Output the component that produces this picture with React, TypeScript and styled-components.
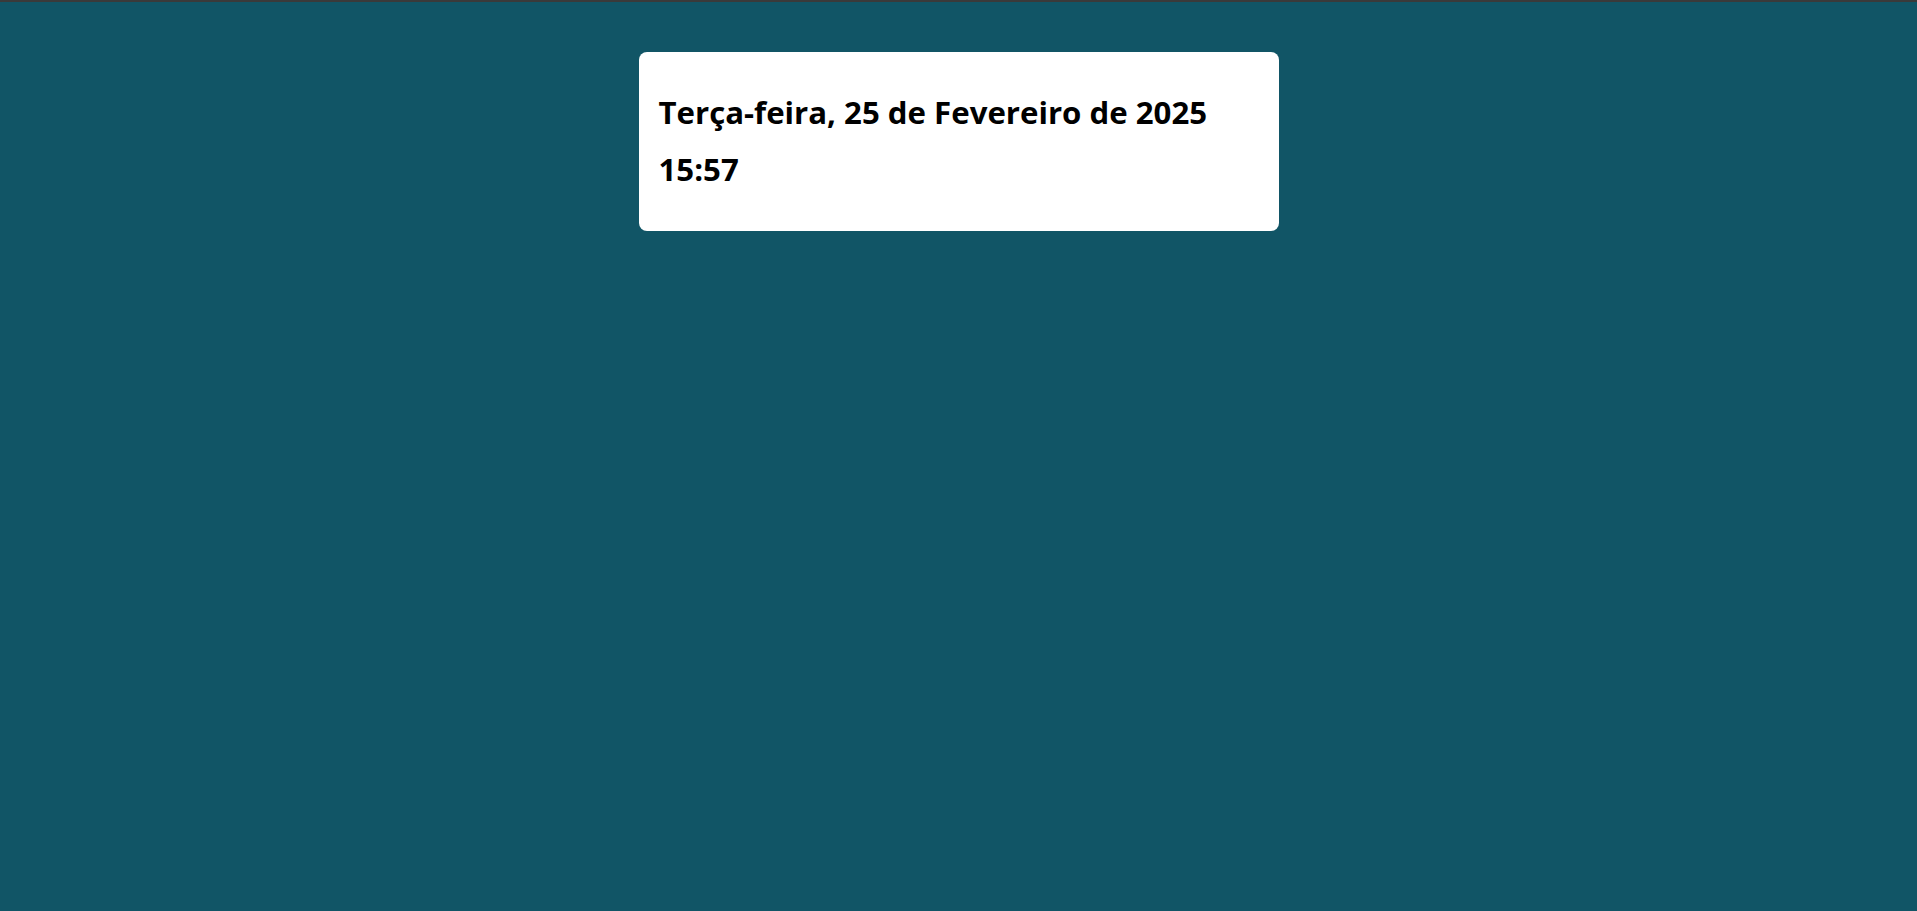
import React from 'react';
import styled, { createGlobalStyle } from 'styled-components';

const GlobalStyle = createGlobalStyle`
   html, body {
      margin: 0;
      padding: 0;
      min-height: 100%;
      background: #115566;
   }
   body {
      font-family: 'Open Sans', 'Noto Sans', sans-serif;
   }
`;

const Page = styled.div`
   min-height: 100vh;
   box-sizing: border-box;
   border-top: 2px solid #3a3a3a;
   padding-top: 50px;
   background: #115566;
`;

const Card = styled.div`
   width: 640px;
   box-sizing: border-box;
   margin: 0 auto;
   padding: 20px 20px 22px;
   background: #ffffff;
   border-radius: 8px;
`;

const Line = styled.h1`
   margin: 23px 0;
   font-size: 31.2px;
   line-height: 34px;
   font-weight: 700;
   color: #000000;
`;

const App = () => {
   return (
      <>
         <GlobalStyle />
         <Page>
            <Card>
               <Line>Terça-feira, 25 de Fevereiro de 2025</Line>
               <Line>15:57</Line>
            </Card>
         </Page>
      </>
   );
};

export default App;
